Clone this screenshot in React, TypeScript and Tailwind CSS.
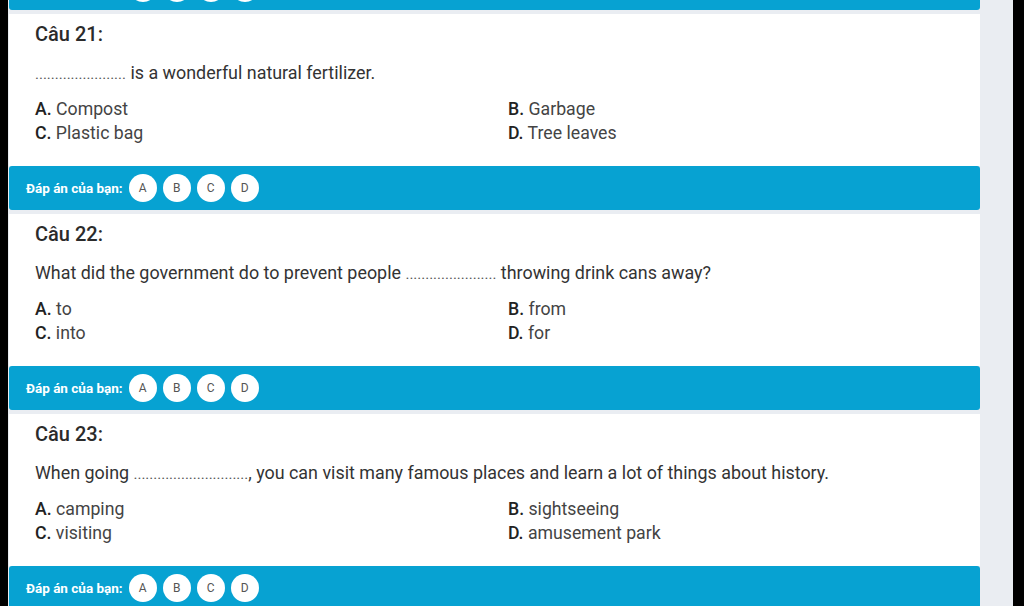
import React from "react";

type Question = {
  num: number;
  before: string;
  dots: string;
  after: string;
  options: [string, string][];
};

const questions: Question[] = [
  {
    num: 21,
    before: "",
    dots: ".......................",
    after: " is a wonderful natural fertilizer.",
    options: [
      ["A.", "Compost"],
      ["B.", "Garbage"],
      ["C.", "Plastic bag"],
      ["D.", "Tree leaves"],
    ],
  },
  {
    num: 22,
    before: "What did the government do to prevent people ",
    dots: ".......................",
    after: " throwing drink cans away?",
    options: [
      ["A.", "to"],
      ["B.", "from"],
      ["C.", "into"],
      ["D.", "for"],
    ],
  },
  {
    num: 23,
    before: "When going ",
    dots: ".............................",
    after: ", you can visit many famous places and learn a lot of things about history.",
    options: [
      ["A.", "camping"],
      ["B.", "sightseeing"],
      ["C.", "visiting"],
      ["D.", "amusement park"],
    ],
  },
];

function AnswerBar({ className = "" }: { className?: string }) {
  return (
    <div className={`h-[44px] shrink-0 bg-[#07a2d2] rounded-[3px] flex items-center pl-[17px] ${className}`}>
      <span className="text-white font-bold text-[13.5px] mr-[6px]">Đáp án của bạn:</span>
      <div className="flex gap-[6px]">
        {["A", "B", "C", "D"].map((l) => (
          <div
            key={l}
            className="w-[28px] h-[28px] rounded-full bg-white flex items-center justify-center text-[12px] text-[#555]"
          >
            {l}
          </div>
        ))}
      </div>
    </div>
  );
}

function QuestionCard({ q }: { q: Question }) {
  return (
    <div className="mt-[4px]">
      <div className="bg-white h-[152px] pl-[26px] pt-[6px]">
        <div className="text-[20px] leading-[28px] font-medium text-[#2b2b2b]">Câu {q.num}:</div>
        <div className="mt-[13px] text-[17.9px] leading-[24px] text-[#333]">
          {q.before}
          <span className="text-[15px] text-[#555]">{q.dots}</span>
          {q.after}
        </div>
        <div className="mt-[11px] grid grid-cols-[473px_1fr] text-[17.7px] leading-[24px] text-[#444]">
          {q.options.map(([k, v]) => (
            <div key={k}>
              <span className="font-medium text-[#222]">{k}</span> {v}
            </div>
          ))}
        </div>
      </div>
      <AnswerBar />
    </div>
  );
}

export default function App() {
  return (
    <div className="bg-black h-[606px] overflow-hidden pl-[8px] pr-[11px]" style={{ fontFamily: "Roboto, 'Noto Sans', sans-serif" }}>
      <div className="bg-[#eaedf2] h-full pl-[1px] pr-[33px] overflow-hidden">
        <AnswerBar className="-mt-[34px]" />
        {questions.map((q) => (
          <QuestionCard key={q.num} q={q} />
        ))}
      </div>
    </div>
  );
}
